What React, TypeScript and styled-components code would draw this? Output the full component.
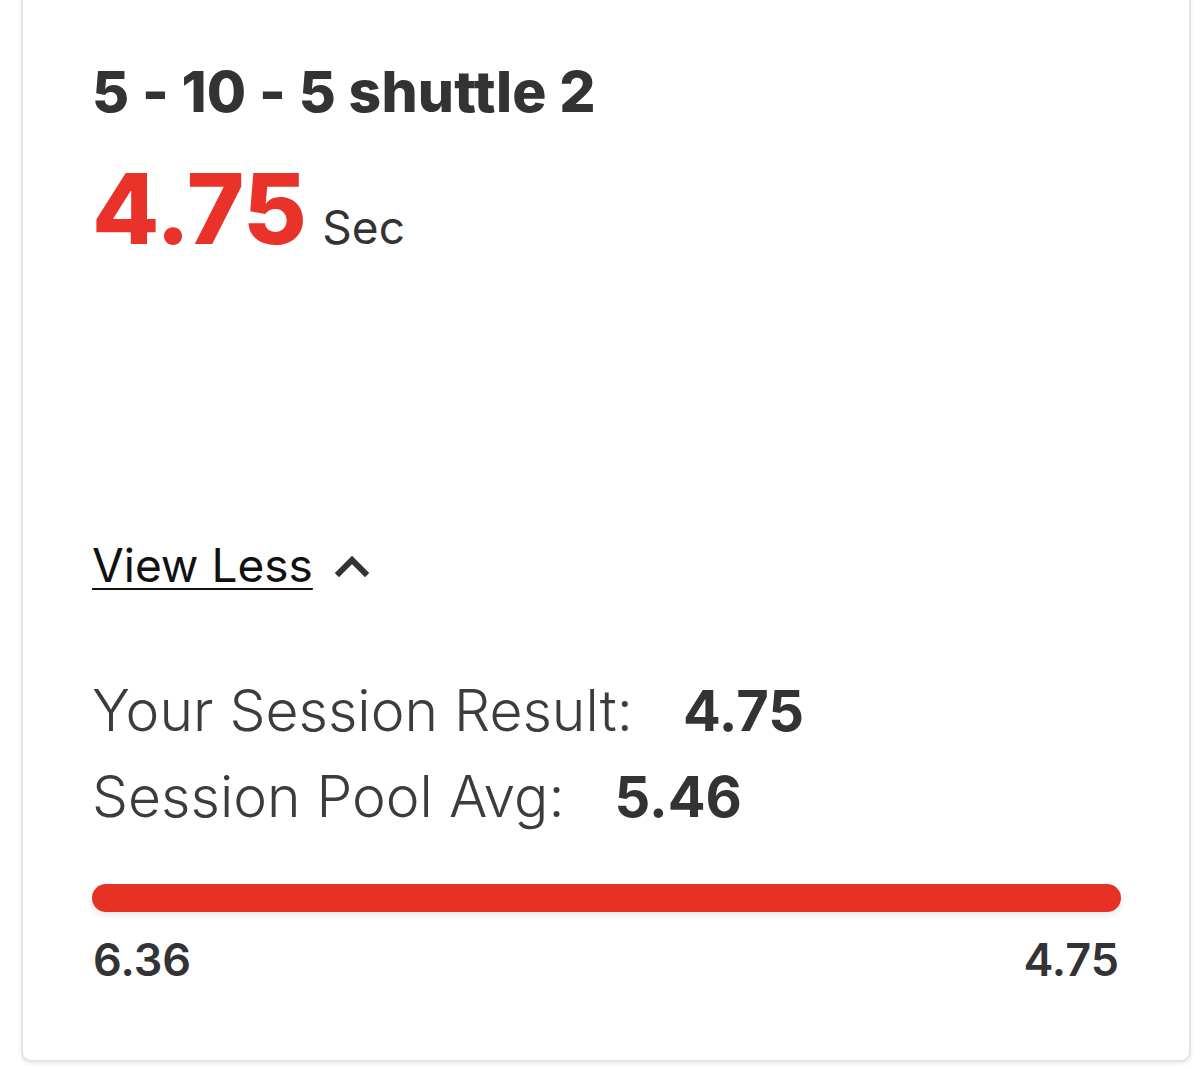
import React from 'react';
import styled, { createGlobalStyle } from 'styled-components';

const GlobalStyle = createGlobalStyle`
  html, body {
    margin: 0;
    padding: 0;
    background: #ffffff;
    font-family: Inter, "Noto Sans", "Liberation Sans", sans-serif;
  }
`;

const Page = styled.div`
  width: 1200px;
  height: 1069px;
  overflow: hidden;
  box-sizing: border-box;
  padding: 0 9px 0 21px;
`;

const Card = styled.div`
  box-sizing: border-box;
  width: 1170px;
  height: 1082px;
  margin-top: -20px;
  padding: 20px 68px 0 69px;
  background: #fff;
  border: 2px solid #e4e4e4;
  border-top: none;
  border-radius: 0 0 10px 10px;
  box-shadow: 0 2px 4px rgba(0, 0, 0, 0.08);
  color: #333;
`;

const Title = styled.h2`
  margin: 58px 0 0;
  font-size: 57px;
  line-height: 68px;
  font-weight: 800;
  letter-spacing: 0.15px;
  color: #333336;
`;

const ResultLine = styled.div`
  display: flex;
  align-items: baseline;
  gap: 16px;
  margin-top: 33px;
`;

const BigValue = styled.span`
  font-size: 98px;
  line-height: 100px;
  font-weight: 800;
  letter-spacing: -0.5px;
  color: #e8322a;
`;

const Unit = styled.span`
  font-size: 46px;
  font-weight: 400;
  color: #333;
`;

const Toggle = styled.button`
  display: flex;
  align-items: center;
  gap: 22px;
  margin-top: 278px;
  padding: 0;
  border: none;
  background: none;
  cursor: pointer;
`;

const ToggleText = styled.span`
  font-family: Inter, "Noto Sans", sans-serif;
  font-size: 46px;
  line-height: 56px;
  font-weight: 400;
  color: #111;
  text-decoration: underline;
  text-underline-offset: 6px;
  text-decoration-thickness: 2px;
`;

const Stats = styled.div`
  margin-top: 86px;
  display: flex;
  flex-direction: column;
  gap: 22px;
`;

const StatRow = styled.div`
  display: flex;
  align-items: baseline;
  gap: 50px;
  font-size: 57px;
  line-height: 63px;
`;

const StatLabel = styled.span`
  font-weight: 300;
  color: #3c3c3e;
`;

const StatValue = styled.span`
  font-size: 56px;
  font-weight: 700;
  color: #333;
`;

const Bar = styled.div`
  margin-top: 55px;
  height: 28px;
  border-radius: 14px;
  background: #e53224;
  box-shadow: 0 4px 6px rgba(0, 0, 0, 0.08);
`;

const Scale = styled.div`
  display: flex;
  justify-content: space-between;
  margin-top: 20px;
  padding: 0 2px 0 1px;
  font-size: 45px;
  line-height: 56px;
  font-weight: 600;
  color: #333336;
`;

const ChevronUp = () => (
  <svg width="34" height="24" viewBox="0 0 34 24">
    <path d="M4 20 L17 7 L30 20" fill="none" stroke="#333" strokeWidth="6" strokeLinecap="square" />
  </svg>
);

export default function App() {
  return (
    <Page>
      <GlobalStyle />
      <Card>
        <Title>5 - 10 - 5 shuttle 2</Title>
        <ResultLine>
          <BigValue>4.75</BigValue>
          <Unit>Sec</Unit>
        </ResultLine>
        <Toggle>
          <ToggleText>View Less</ToggleText>
          <ChevronUp />
        </Toggle>
        <Stats>
          <StatRow>
            <StatLabel>Your Session Result:</StatLabel>
            <StatValue>4.75</StatValue>
          </StatRow>
          <StatRow>
            <StatLabel>Session Pool Avg:</StatLabel>
            <StatValue>5.46</StatValue>
          </StatRow>
        </Stats>
        <Bar />
        <Scale>
          <span>6.36</span>
          <span>4.75</span>
        </Scale>
      </Card>
    </Page>
  );
}
